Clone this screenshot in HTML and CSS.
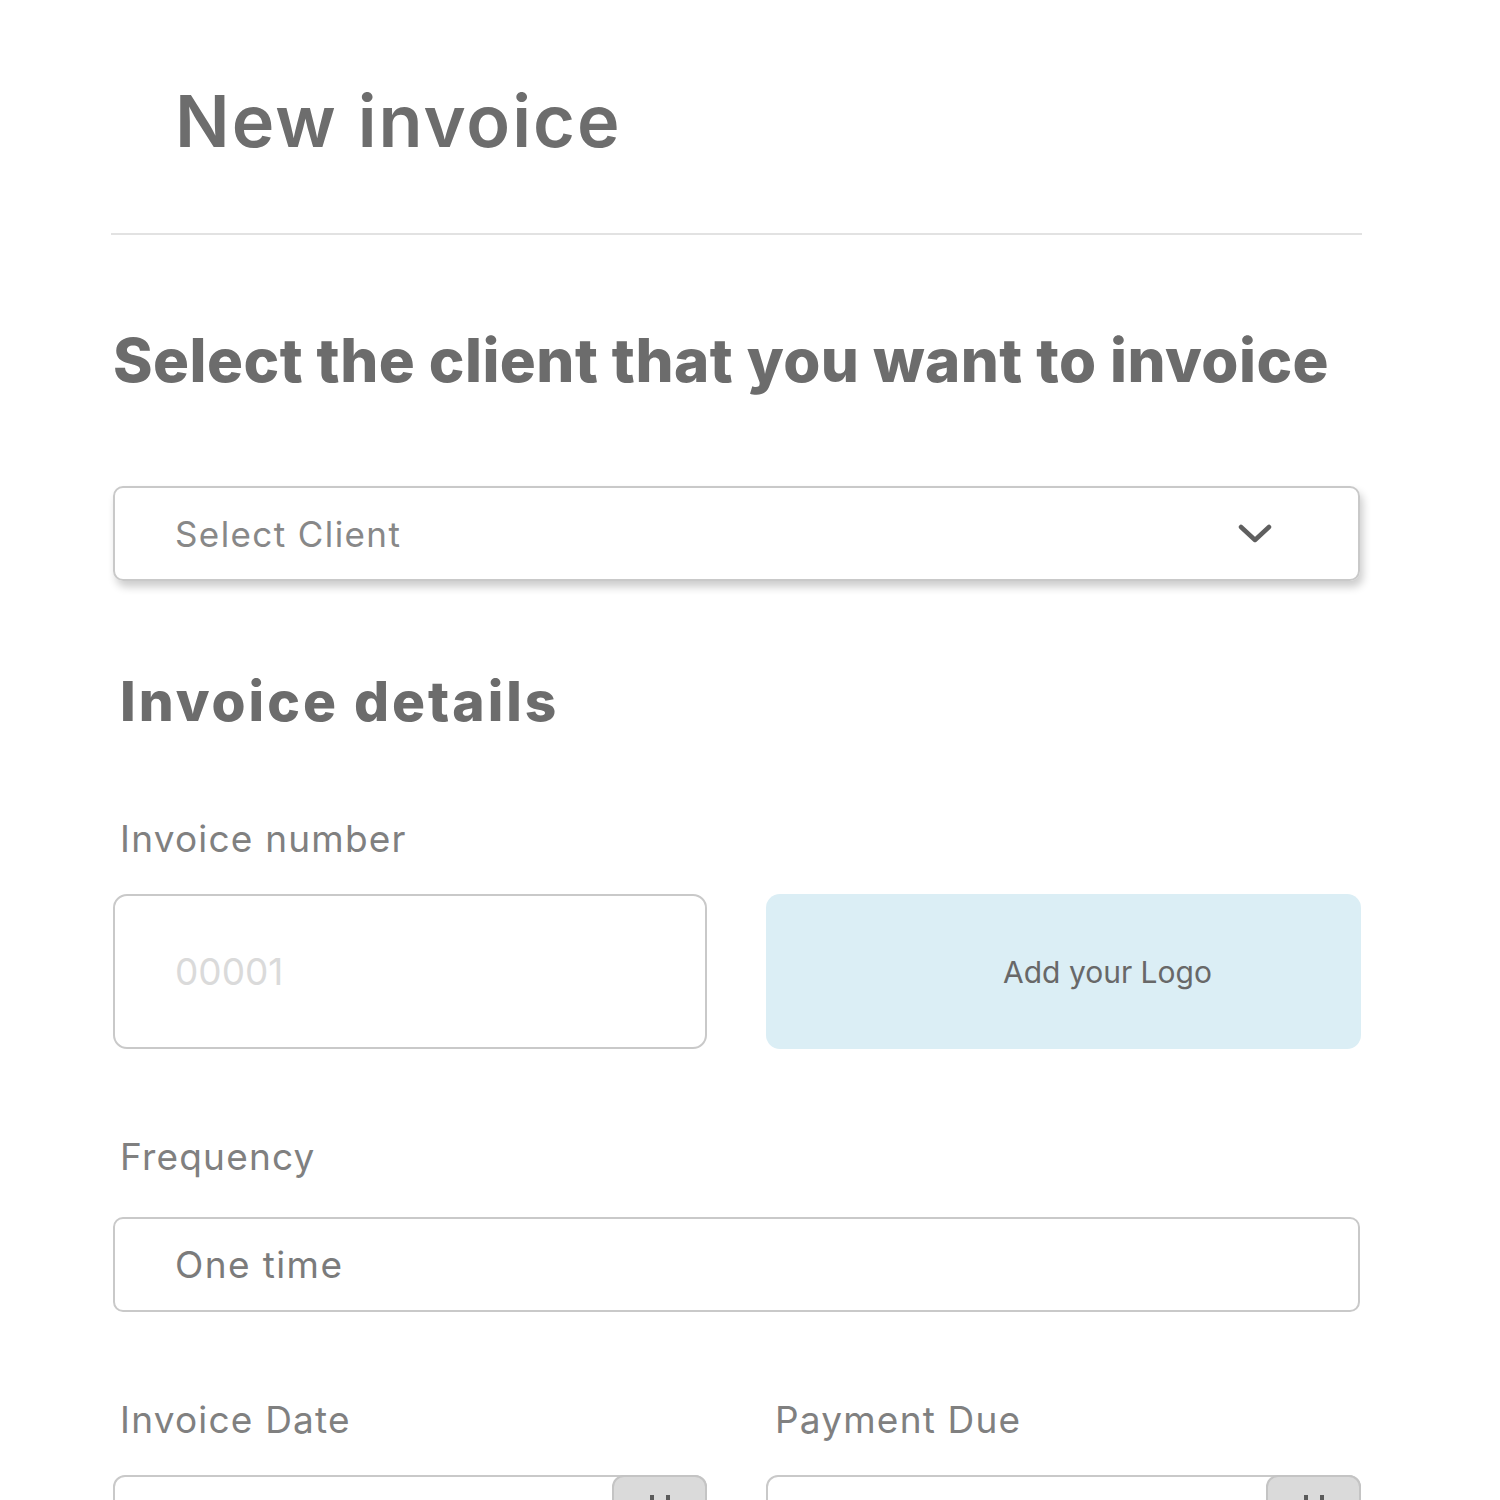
FILE: index.html
```html
<!DOCTYPE html>
<html lang="en">
<head>
    <meta charset="UTF-8">
    <meta name="viewport" content="width=device-width, initial-scale=1.0">
    <title>New invoice</title>
    <link rel="stylesheet" href="styles.css">
</head>
<body>
    <div class="container">
        <h1 class="page-title">New invoice</h1>
        <hr class="divider">

        <h2 class="section-title client-title">Select the client that you want to invoice</h2>
        <div class="select-box">
            <span class="select-text">Select Client</span>
            <svg class="chevron" width="34" height="22" viewBox="0 0 34 22">
                <path d="M3 4 L17 17 L31 4" fill="none" stroke="#5f5f5f" stroke-width="4.5" stroke-linecap="round" stroke-linejoin="round"/>
            </svg>
        </div>

        <h2 class="section-title details-title">Invoice details</h2>

        <label class="field-label number-label">Invoice number</label>
        <div class="number-row">
            <div class="text-box tall"><span class="placeholder">00001</span></div>
            <div class="logo-box">Add your Logo</div>
        </div>

        <label class="field-label freq-label">Frequency</label>
        <div class="text-box"><span class="value">One time</span></div>

        <div class="date-labels">
            <span class="field-label">Invoice Date</span>
            <span class="field-label">Payment Due</span>
        </div>
        <div class="date-row">
            <div class="date-box">
                <div class="date-button">
                    <svg width="40" height="40" viewBox="0 0 40 40">
                        <rect x="10" y="0" width="4" height="10" fill="#5a5a5a"/>
                        <rect x="26" y="0" width="4" height="10" fill="#5a5a5a"/>
                    </svg>
                </div>
            </div>
            <div class="date-box">
                <div class="date-button">
                    <svg width="40" height="40" viewBox="0 0 40 40">
                        <rect x="10" y="0" width="4" height="10" fill="#5a5a5a"/>
                        <rect x="26" y="0" width="4" height="10" fill="#5a5a5a"/>
                    </svg>
                </div>
            </div>
        </div>
    </div>
</body>
</html>
```

FILE: styles.css
```css
body {
    margin: 0;
    background: #ffffff;
    font-family: Inter, 'Open Sans', sans-serif;
    color: #6e6e6e;
}

.container {
    margin-left: 111px;
    width: 1251px;
}

.page-title {
    margin: 85px 0 0;
    padding-left: 64px;
    font-size: 72px;
    line-height: 1;
    font-weight: 600;
    letter-spacing: 2px;
    color: #6d6d6d;
}

.divider {
    margin: 76px 0 0;
    border: none;
    height: 2px;
    background: #e2e2e2;
}

.section-title {
    margin: 0;
    line-height: 1;
    font-weight: 800;
    color: #6c6c6c;
}

.client-title {
    margin-top: 95px;
    padding-left: 2px;
    font-size: 60px;
    letter-spacing: 0.45px;
}

.select-box {
    margin-top: 96px;
    margin-left: 2px;
    width: 1247px;
    height: 95px;
    box-sizing: border-box;
    border: 2px solid #c9c9c9;
    border-radius: 10px;
    box-shadow: 3px 6px 9px rgba(0, 0, 0, 0.2);
    display: flex;
    align-items: center;
    justify-content: space-between;
    padding: 0 86px 0 60px;
}

.select-text {
    font-size: 35px;
    letter-spacing: 1.4px;
    color: #888888;
}

.details-title {
    margin-top: 93px;
    padding-left: 9px;
    font-size: 55px;
    letter-spacing: 3px;
}

.field-label {
    display: block;
    font-size: 37px;
    line-height: 1;
    letter-spacing: 1.2px;
    color: #808080;
    padding-left: 9px;
}

.number-label {
    margin-top: 91px;
}

.number-row {
    margin-top: 37px;
    margin-left: 2px;
    display: grid;
    grid-template-columns: 594px 595px;
    column-gap: 59px;
}

.text-box {
    margin-left: 2px;
    width: 1247px;
    height: 95px;
    box-sizing: border-box;
    border: 2px solid #c9c9c9;
    border-radius: 10px;
    display: flex;
    align-items: center;
    padding-left: 60px;
}

.number-row .text-box {
    margin-left: 0;
    width: auto;
}

.text-box.tall {
    height: 155px;
    border-radius: 14px;
}

.placeholder {
    font-size: 37px;
    color: #dadada;
}

.value {
    font-size: 37px;
    letter-spacing: 1.4px;
    color: #7b7b7b;
}

.logo-box {
    height: 155px;
    background: #dbeef5;
    border-radius: 14px;
    display: flex;
    align-items: center;
    justify-content: center;
    padding-left: 88px;
    font-size: 30px;
    color: #686868;
}

.freq-label {
    margin-top: 89px;
    margin-bottom: 42px;
}

.date-labels {
    margin-top: 89px;
    display: grid;
    grid-template-columns: 655px 596px;
}

.date-labels .field-label:last-child {
    padding-left: 9px;
}

.date-row {
    margin-top: 37px;
    margin-left: 2px;
    display: grid;
    grid-template-columns: 594px 595px;
    column-gap: 59px;
}

.date-box {
    height: 95px;
    box-sizing: border-box;
    border: 2px solid #c9c9c9;
    border-radius: 12px;
    display: flex;
    justify-content: flex-end;
}

.date-button {
    width: 95px;
    margin: -2px -2px -2px 0;
    box-sizing: border-box;
    border: 2px solid #c4c4c4;
    border-radius: 12px;
    background: #dadada;
    display: flex;
    justify-content: center;
    padding-top: 18px;
}
```
